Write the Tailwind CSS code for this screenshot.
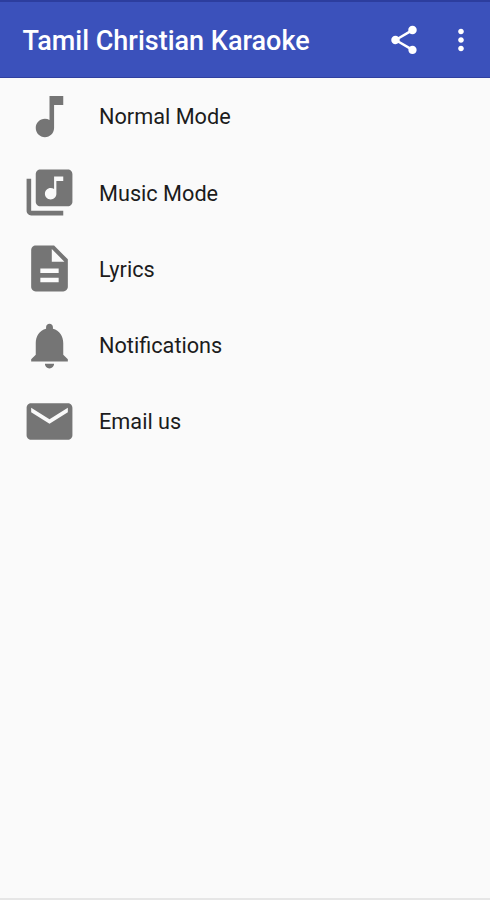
<!DOCTYPE html>
<html lang="en">
<head>
    <meta charset="UTF-8">
    <meta name="viewport" content="width=device-width, initial-scale=1.0">
    <title>Tamil Christian Karaoke</title>
    <script src="https://cdn.jsdelivr.net/npm/@tailwindcss/browser@4"></script>
</head>
<body class="bg-[#fafafa] font-['Roboto',sans-serif] text-[#1c1c1c]">
    <div class="flex h-screen flex-col overflow-hidden border-b-2 border-[#e6e6e6]">
        <!-- App bar -->
        <header class="flex h-[78px] shrink-0 items-center border-t-2 border-b border-t-[#2c3d9e] border-b-[#3040a0] bg-[#3b51bb] pr-3 pl-[22.5px]">
            <h1 class="flex-1 pt-1 text-[27px] font-medium whitespace-nowrap text-white">Tamil Christian Karaoke</h1>
            <svg class="mr-[23px] size-[34px] fill-white" viewBox="0 0 24 24"><path d="M18 16.08c-.76 0-1.44.3-1.96.77L8.91 12.7c.05-.23.09-.46.09-.7s-.04-.47-.09-.7l7.05-4.11c.54.5 1.25.81 2.04.81 1.66 0 3-1.34 3-3s-1.34-3-3-3-3 1.34-3 3c0 .24.04.47.09.7L8.04 9.81C7.5 9.31 6.79 9 6 9c-1.66 0-3 1.34-3 3s1.34 3 3 3c.79 0 1.5-.31 2.04-.81l7.12 4.16c-.05.21-.08.43-.08.65 0 1.61 1.31 2.92 2.92 2.92s2.92-1.31 2.92-2.92-1.31-2.92-2.92-2.92z"/></svg>
            <svg class="size-[34px] fill-white" viewBox="0 0 24 24"><path d="M12 8c1.1 0 2-.9 2-2s-.9-2-2-2-2 .9-2 2 .9 2 2 2zm0 2c-1.1 0-2 .9-2 2s.9 2 2 2 2-.9 2-2-.9-2-2-2zm0 6c-1.1 0-2 .9-2 2s.9 2 2 2 2-.9 2-2-.9-2-2-2z"/></svg>
        </header>

        <!-- Menu -->
        <ul class="pt-[0.5px] pl-[22px] text-[21.7px]">
            <li class="flex h-[76.2px] items-center gap-[22px]">
                <svg class="size-[55px] fill-[#757575]" viewBox="0 0 24 24"><path d="M12 3v10.55c-.59-.34-1.27-.55-2-.55-2.21 0-4 1.79-4 4s1.79 4 4 4 4-1.79 4-4V7h4V3h-6z"/></svg>
                <span class="pt-0.5">Normal Mode</span>
            </li>
            <li class="flex h-[76.2px] items-center gap-[22px]">
                <svg class="size-[55px] fill-[#757575]" viewBox="0 0 24 24"><path d="M20 2H8c-1.1 0-2 .9-2 2v12c0 1.1.9 2 2 2h12c1.1 0 2-.9 2-2V4c0-1.1-.9-2-2-2zm-2 5h-3v5.5c0 1.38-1.12 2.5-2.5 2.5S10 13.88 10 12.5s1.12-2.5 2.5-2.5c.57 0 1.08.19 1.5.51V5h4v2zM4 6H2v14c0 1.1.9 2 2 2h14v-2H4V6z"/></svg>
                <span class="pt-0.5">Music Mode</span>
            </li>
            <li class="flex h-[76.2px] items-center gap-[22px]">
                <svg class="size-[55px] fill-[#757575]" viewBox="0 0 24 24"><path d="M14 2H6c-1.1 0-1.99.9-1.99 2L4 20c0 1.1.89 2 1.99 2H18c1.1 0 2-.9 2-2V8l-6-6zm2 16H8v-2h8v2zm0-4H8v-2h8v2zm-3-5V3.5L18.5 9H13z"/></svg>
                <span class="pt-0.5">Lyrics</span>
            </li>
            <li class="flex h-[76.2px] items-center gap-[22px]">
                <svg class="size-[55px] fill-[#757575]" viewBox="0 0 24 24"><path d="M12 22c1.1 0 2-.9 2-2h-4c0 1.1.89 2 2 2zm6-6v-5c0-3.07-1.64-5.64-4.5-6.32V4c0-.83-.67-1.5-1.5-1.5s-1.5.67-1.5 1.5v.68C7.63 5.36 6 7.92 6 11v5l-2 2v1h16v-1l-2-2z"/></svg>
                <span class="pt-0.5">Notifications</span>
            </li>
            <li class="flex h-[76.2px] items-center gap-[22px]">
                <svg class="size-[55px] fill-[#757575]" viewBox="0 0 24 24"><path d="M20 4H4c-1.1 0-1.99.9-1.99 2L2 18c0 1.1.9 2 2 2h16c1.1 0 2-.9 2-2V6c0-1.1-.9-2-2-2zm0 4l-8 5-8-5V6l8 5 8-5v2z"/></svg>
                <span class="pt-0.5">Email us</span>
            </li>
        </ul>
    </div>
</body>
</html>
